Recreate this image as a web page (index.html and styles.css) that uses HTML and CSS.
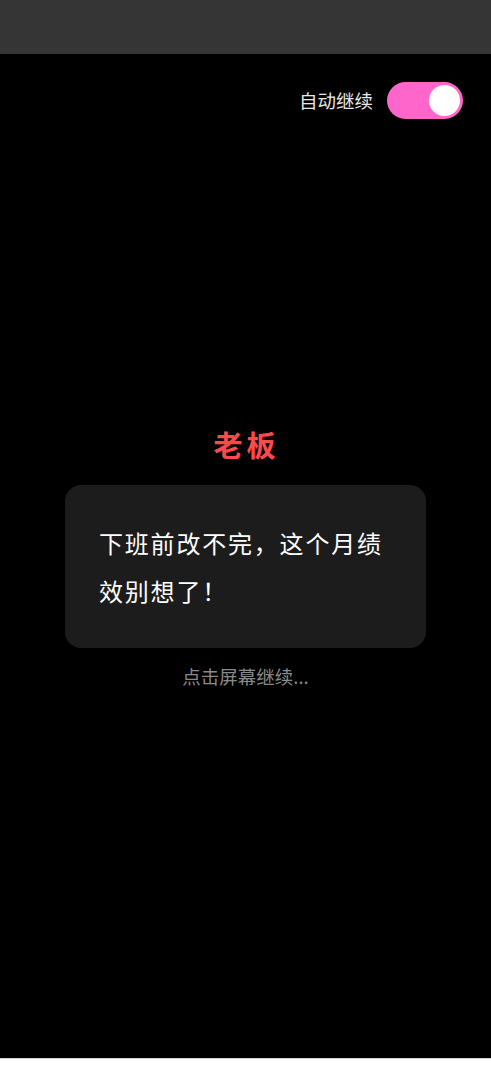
FILE: index.html
```html
<!DOCTYPE html>
<html lang="zh">
<head>
<meta charset="utf-8">
<title>剧情</title>
<link rel="stylesheet" href="styles.css">
</head>
<body>
<div class="topbar"></div>
<main class="screen">
  <div class="controls">
    <span class="auto-label">自动继续</span>
    <div class="toggle on"><div class="knob"></div></div>
  </div>
  <section class="dialog">
    <h1 class="speaker">老板</h1>
    <div class="bubble">
      <p class="line">下班前改不完，这个月绩效别想了！</p>
    </div>
    <p class="hint">点击屏幕继续...</p>
  </section>
</main>
</body>
</html>
```

FILE: styles.css
```css
html, body {
  margin: 0;
  padding: 0;
}
body {
  background: #ffffff;
  font-family: "Noto Sans CJK SC", "Noto Sans", sans-serif;
}
.topbar {
  height: 54px;
  background: #353535;
}
.screen {
  height: 1004px;
  background: #000000;
  border-bottom: 1px solid #d8d8d8;
  display: flex;
  flex-direction: column;
}
.controls {
  display: flex;
  justify-content: flex-end;
  align-items: center;
  gap: 14px;
  padding: 28px 28px 0 0;
}
.auto-label {
  color: #e8e8e8;
  font-size: 18.5px;
  line-height: 37px;
}
.toggle {
  width: 76px;
  height: 37px;
  border-radius: 19px;
  background: #ff66cc;
  display: flex;
  align-items: center;
  justify-content: flex-end;
  padding: 0 3px;
  box-sizing: border-box;
}
.knob {
  width: 31px;
  height: 31px;
  border-radius: 50%;
  background: #ffffff;
}
.dialog {
  display: flex;
  flex-direction: column;
  align-items: center;
  margin-top: 308px;
}
.speaker {
  margin: 0 0 23px 0;
  color: #ff4a4d;
  font-size: 29px;
  font-weight: 700;
  line-height: 35px;
  letter-spacing: 4px;
  padding-left: 2px;
}
.bubble {
  width: 361px;
  box-sizing: border-box;
  background: #1c1c1c;
  border-radius: 16px;
  padding: 34px 28px 33px 34px;
}
.line {
  margin: 0;
  color: #ffffff;
  font-size: 24px;
  line-height: 48px;
  letter-spacing: 1.8px;
}
.hint {
  margin: 16px 0 0 0;
  color: #8a8a8a;
  font-size: 18.5px;
  line-height: 24px;
}
```
